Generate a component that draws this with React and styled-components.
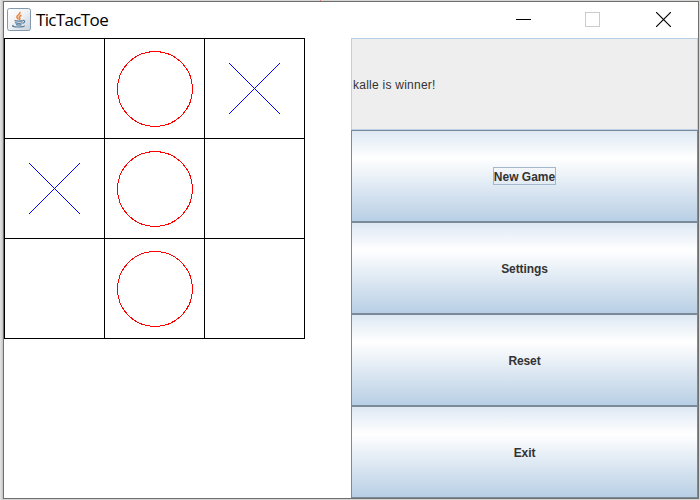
import React from "react";
import styled, { createGlobalStyle } from "styled-components";

const GlobalStyle = createGlobalStyle`
  * { box-sizing: border-box; }
  html, body { margin: 0; height: 100%; overflow: hidden; }
  body { background: #d9d9d8; }
`;

const Desktop = styled.div`
  width: 700px;
  height: 500px;
  padding: 1px 1px 1px 3px;
  background:
    linear-gradient(#e88080, #e88080) 320px 0 / 1px 1px no-repeat,
    linear-gradient(90deg, #e6e6e6, #c4c4c4) 0 0 / 3px 100% no-repeat,
    #d6d6d5;
`;

const Window = styled.div`
  width: 696px;
  height: 498px;
  display: flex;
  flex-direction: column;
  border: 1px solid #6f6f6f;
  background: #fff;
`;

const TitleBar = styled.header`
  height: 36px;
  flex: none;
  display: flex;
  align-items: center;
  padding-left: 3px;
`;

const AppIcon = styled.svg`
  flex: none;
  margin-bottom: 1px;
`;

const Title = styled.h1`
  margin: 0 auto 0 5px;
  font: 400 17px/24px "Open Sans", "Noto Sans", sans-serif;
  letter-spacing: -0.65px;
  color: #000;
`;

const Controls = styled.div`
  display: flex;
  align-self: flex-start;
  width: 210px;
`;

const ControlButton = styled.button`
  flex: none;
  width: 70px;
  height: 35px;
  padding: 0 ${(p) => p.$inset || 0}px 0 0;
  border: 0;
  background: none;
  display: flex;
  align-items: center;
  justify-content: center;
`;

const Content = styled.main`
  flex: 1;
  display: grid;
  grid-template-columns: 347px 347px;
`;

const Board = styled.div`
  display: grid;
  grid-template-columns: repeat(3, 100px);
  grid-template-rows: repeat(3, 100px);
  width: 301px;
  height: 301px;
  border: solid #000;
  border-width: 0 1px 1px 0;
`;

const Cell = styled.div`
  border: solid #000;
  border-width: 1px 0 0 1px;
  svg { display: block; }
`;

const SidePanel = styled.div`
  display: grid;
  grid-template-rows: repeat(5, 92px);
`;

const Status = styled.div`
  display: flex;
  align-items: center;
  padding: 2px 1px 0;
  border: 1px solid #b8cfe5;
  background: #eee;
  color: #333;
  font: 12px/16px "Liberation Sans", Arial, sans-serif;
  letter-spacing: 0.25px;
`;

const MenuButton = styled.button`
  display: flex;
  align-items: center;
  justify-content: center;
  padding: 0;
  border: 1px solid #7a8a99;
  border-radius: 0;
  background: linear-gradient(#dde8f3 0%, #fff 30%, #b8cfe5 100%);
  color: #333;
  font: bold 12px/16px "Liberation Sans", Arial, sans-serif;
`;

const Label = styled.span`
  height: 18px;
  padding: 1px 0 0;
  border: 1px solid ${(p) => (p.$focused ? "#a3b8cc" : "transparent")};
  letter-spacing: ${(p) => (p.$focused ? 0 : -0.1)}px;
`;

const JavaIcon = () => (
  <AppIcon width="24" height="24" viewBox="0 0 24 24" fill="none">
    <defs>
      <linearGradient id="tile" x1="0" y1="0" x2="1" y2="1">
        <stop offset="0" stopColor="#fff" />
        <stop offset="0.5" stopColor="#eef1f4" />
        <stop offset="1" stopColor="#c5ced7" />
      </linearGradient>
    </defs>
    <rect x="0.5" y="0.5" width="23" height="22" rx="2" fill="url(#tile)" stroke="#8499ad" />
    <path d="M12.7 4c1.6 2-3.7 3.3-2.8 5.4.3.8 1.3 1.4 1.6 2.2M14.5 7.2c-3 1.3-2.4 2.2-1.7 3 .4.5.1 1-.4 1.5" stroke="#ec8135" strokeWidth="1.5" />
    <path d="M7.5 12.5c1 .9 7 .8 8.3.1M8 14.6c2 .8 5.5.7 7.3.1M9 16.6c1.8.6 4 .5 5.5 0M16 12.5c2.4-.4 2.3 2-.4 2.8M6.6 17.2c-2.9 1 .2 1.8 4.5 1.8 4 0 6.6-.7 6.2-1.3" stroke="#587e9d" strokeWidth="1.2" />
  </AppIcon>
);

const MinimizeIcon = () => (
  <svg width="15" height="15" shapeRendering="crispEdges">
    <path d="M0 7.5h15" stroke="#000" />
  </svg>
);

const MaximizeIcon = () => (
  <svg width="15" height="15" shapeRendering="crispEdges">
    <rect x="0.5" y="0.5" width="14" height="14" fill="none" stroke="#ccc" />
  </svg>
);

const CloseIcon = () => (
  <svg width="15" height="15">
    <path d="M0 0l15 15M15 0L0 15" stroke="#000" strokeWidth="1.15" />
  </svg>
);

const Mark = ({ kind }) => (
  <svg width="99" height="99" fill="none" shapeRendering="crispEdges">
    {kind === "O" ? (
      <circle cx="50" cy="50" r="37.5" stroke="#f00" />
    ) : (
      <path d="M24 24l51 51M75 24L24 75" stroke="#00f" />
    )}
  </svg>
);

const cells = ["", "O", "X", "X", "O", "", "", "O", ""];
const actions = ["New Game", "Settings", "Reset", "Exit"];

export default function App() {
  return (
    <>
      <GlobalStyle />
      <Desktop>
        <Window>
          <TitleBar>
            <JavaIcon />
            <Title>TicTacToe</Title>
            <Controls>
              <ControlButton aria-label="Minimize"><MinimizeIcon /></ControlButton>
              <ControlButton aria-label="Maximize" disabled $inset={2}><MaximizeIcon /></ControlButton>
              <ControlButton aria-label="Close"><CloseIcon /></ControlButton>
            </Controls>
          </TitleBar>
          <Content>
            <Board>
              {cells.map((kind, i) => (
                <Cell key={i}>{kind && <Mark kind={kind} />}</Cell>
              ))}
            </Board>
            <SidePanel>
              <Status>kalle is winner!</Status>
              {actions.map((name, i) => (
                <MenuButton key={name}>
                  <Label $focused={i === 0}>{name}</Label>
                </MenuButton>
              ))}
            </SidePanel>
          </Content>
        </Window>
      </Desktop>
    </>
  );
}
